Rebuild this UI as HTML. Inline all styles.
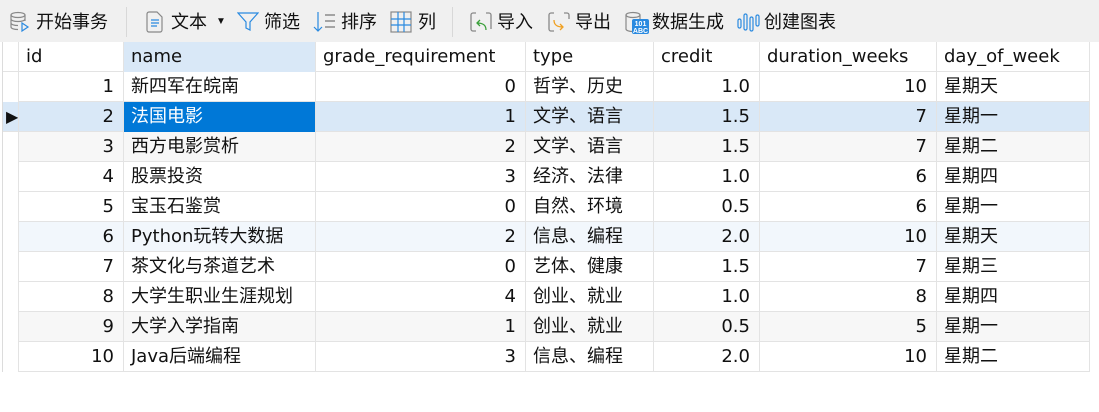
<!DOCTYPE html>
<html><head><meta charset="utf-8"><style>
*{margin:0;padding:0;box-sizing:border-box}
body{width:1099px;height:412px;background:#fff;font-family:"DejaVu Sans","Noto Sans CJK SC",sans-serif;font-size:18px;color:#111;position:relative;overflow:hidden}
.tb{position:absolute;left:0;top:0;width:1099px;height:42px;background:#f0f0f0;font-family:"Liberation Sans","Noto Sans CJK SC",sans-serif}
.ti{position:absolute;top:11px;font-size:18px;line-height:22px;white-space:nowrap}
.sep{position:absolute;top:7px;width:1px;height:30px;background:#d8d8d8}
.r{position:absolute;left:2px;width:1088px;height:30px;border-bottom:1px solid #e3e3e3}
.c{position:absolute;top:0;height:30px;line-height:30px;border-right:1px solid #e3e3e3;padding:0 7px;white-space:nowrap;overflow:hidden}
.n{text-align:right;padding-right:9px}
</style></head><body>
<div class="tb">
<svg style="position:absolute;left:9px;top:11px" width="22" height="22" viewBox="0 0 22 22" fill="none" stroke="#888" stroke-width="1.2"><ellipse cx="9" cy="4" rx="7" ry="2.5"/><path d="M2 4v12c0 1.4 3 2.5 7 2.5M16 4v6M2 8c0 1.4 3 2.5 7 2.5s7-1.1 7-2.5M2 12c0 1.4 3 2.5 7 2.5"/><path d="M13 12l6 4-6 4z" stroke="#2a8ae0"/></svg>
<span class="ti" style="left:36px">开始事务</span>
<div class="sep" style="left:126px"></div>
<svg style="position:absolute;left:145px;top:11px" width="20" height="22" viewBox="0 0 20 22" fill="none" stroke="#888" stroke-width="1.2"><path d="M2 3a2 2 0 0 1 2-2h8l5 5v13a2 2 0 0 1-2 2H4a2 2 0 0 1-2-2z"/><path d="M6 9h8M6 12h8M6 15h6" stroke="#2a8ae0"/></svg>
<span class="ti" style="left:171px">文本</span>
<span class="ti" style="left:216px;font-size:10px">▼</span>
<svg style="position:absolute;left:237px;top:12px" width="22" height="20" viewBox="0 0 22 20" fill="none" stroke="#2a8ae0" stroke-width="1.2"><path d="M1 1h20l-8 9v8l-4-2v-6z"/></svg>
<span class="ti" style="left:264px">筛选</span>
<svg style="position:absolute;left:313px;top:11px" width="24" height="22" viewBox="0 0 24 22" fill="none" stroke-width="1.2"><path d="M5 1v19M1 16l4 4 4-4" stroke="#2a8ae0"/><path d="M12 4h10M12 10h10M12 16h10" stroke="#777"/></svg>
<span class="ti" style="left:341px">排序</span>
<svg style="position:absolute;left:390px;top:11px" width="22" height="22" viewBox="0 0 22 22" fill="none" stroke="#2a8ae0" stroke-width="1.2"><rect x="1" y="1" width="20" height="20" stroke="#888"/><path d="M8 1v20M14 1v20M1 8h20M1 14h20"/></svg>
<span class="ti" style="left:418px">列</span>
<div class="sep" style="left:452px"></div>
<svg style="position:absolute;left:470px;top:12px" width="22" height="20" viewBox="0 0 22 20" fill="none" stroke-width="1.3"><path d="M6 1H3a2 2 0 0 0-2 2v14a2 2 0 0 0 2 2h3M16 1h3a2 2 0 0 1 2 2v14" stroke="#888"/><path d="M16 18c0-5-3-7-9-7M10 8l-3 3 3 3" stroke="#3aa03a"/></svg>
<span class="ti" style="left:497px">导入</span>
<svg style="position:absolute;left:548px;top:12px" width="22" height="20" viewBox="0 0 22 20" fill="none" stroke-width="1.3"><path d="M6 1H3a2 2 0 0 0-2 2v14a2 2 0 0 0 2 2h3M16 1h3a2 2 0 0 1 2 2v4" stroke="#888"/><path d="M6 8c0 5 3 7 9 7M12 12l3 3-3 3" stroke="#f0a020"/></svg>
<span class="ti" style="left:575px">导出</span>
<svg style="position:absolute;left:624px;top:11px" width="26" height="24" viewBox="0 0 26 24" fill="none" stroke="#888" stroke-width="1.2"><ellipse cx="9" cy="4" rx="7" ry="2.5"/><path d="M2 4v14c0 1.4 3 2.5 7 2.5M16 4v4"/><rect x="8" y="8" width="17" height="15" rx="2" fill="#2a8ae0" stroke="none"/><text x="16.5" y="15" font-size="7" fill="#fff" text-anchor="middle" font-family="Liberation Sans" font-weight="bold" stroke="none">101</text><text x="16.5" y="22" font-size="7" fill="#fff" text-anchor="middle" font-family="Liberation Sans" font-weight="bold" stroke="none">ABC</text></svg>
<span class="ti" style="left:652px">数据生成</span>
<svg style="position:absolute;left:737px;top:12px" width="26" height="20" viewBox="0 0 26 20" fill="none" stroke="#2a8ae0" stroke-width="1.2"><rect x="1" y="7" width="3" height="9" rx="1.5"/><rect x="7" y="2" width="3" height="16" rx="1.5"/><rect x="13" y="5" width="3" height="14" rx="1.5"/><rect x="19" y="3" width="3" height="11" rx="1.5"/></svg>
<span class="ti" style="left:764px">创建图表</span>
</div>

<div class="r" style="top:42px;background:#fff">
<div class="c" style="left:0;width:17px"></div>
<div class="c" style="left:17px;width:105px">id</div>
<div class="c" style="left:122px;width:192px;background:#d9e8f7">name</div>
<div class="c" style="left:314px;width:210px">grade_requirement</div>
<div class="c" style="left:524px;width:128px">type</div>
<div class="c" style="left:652px;width:106px">credit</div>
<div class="c" style="left:758px;width:177px">duration_weeks</div>
<div class="c" style="left:935px;width:153px">day_of_week</div>
</div>

<div id="rows"></div>
<div style="position:absolute;left:2px;top:42px;width:1px;height:330px;background:#dcdcdc"></div>
<script>
var d=[[1,"新四军在皖南",0,"哲学、历史","1.0",10,"星期天"],[2,"法国电影",1,"文学、语言","1.5",7,"星期一"],[3,"西方电影赏析",2,"文学、语言","1.5",7,"星期二"],[4,"股票投资",3,"经济、法律","1.0",6,"星期四"],[5,"宝玉石鉴赏",0,"自然、环境","0.5",6,"星期一"],[6,"Python玩转大数据",2,"信息、编程","2.0",10,"星期天"],[7,"茶文化与茶道艺术",0,"艺体、健康","1.5",7,"星期三"],[8,"大学生职业生涯规划",4,"创业、就业","1.0",8,"星期四"],[9,"大学入学指南",1,"创业、就业","0.5",5,"星期一"],[10,"Java后端编程",3,"信息、编程","2.0",10,"星期二"]];
var h="";
d.forEach(function(r,i){
var bg=i==1?"#d9e8f7":(i==5?"#f2f7fc":((i==2||i==8)?"#f7f7f7":"#fff"));
var nm=i==1?"background:#0078d7;color:#fff;":"";
var ind=i==1?"":"background:#fff;";
h+='<div class="r" style="top:'+(72+i*30)+'px;background:'+bg+'">'+
'<div class="c" style="left:0;width:17px;padding:0 0 0 4px;font-size:16px;'+ind+'">'+(i==1?'▶':'')+'</div>'+
'<div class="c n" style="left:17px;width:105px">'+r[0]+'</div>'+
'<div class="c" style="left:122px;width:192px;'+nm+'">'+r[1]+'</div>'+
'<div class="c n" style="left:314px;width:210px">'+r[2]+'</div>'+
'<div class="c" style="left:524px;width:128px">'+r[3]+'</div>'+
'<div class="c n" style="left:652px;width:106px">'+r[4]+'</div>'+
'<div class="c n" style="left:758px;width:177px">'+r[5]+'</div>'+
'<div class="c" style="left:935px;width:153px">'+r[6]+'</div></div>';
});
document.getElementById("rows").innerHTML=h;
</script>
</body></html>
